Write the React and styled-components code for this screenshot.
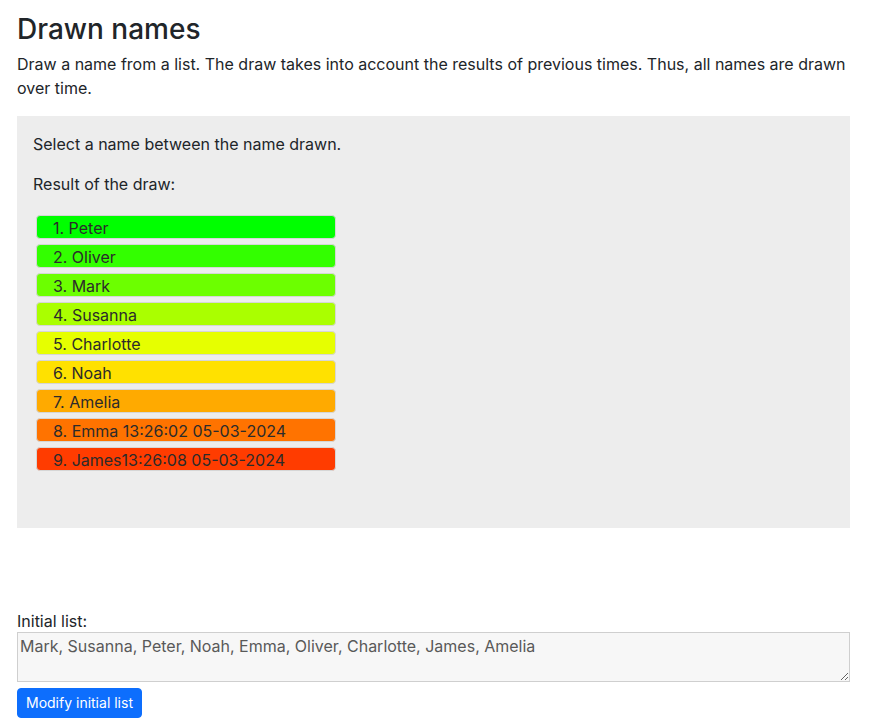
import React from "react";
import styled, { createGlobalStyle } from "styled-components";

const Global = createGlobalStyle`
  html, body { margin: 0; padding: 0; background: #fff; }
  body {
    font-family: Inter, "Noto Sans", sans-serif;
    font-size: 16px;
    line-height: 1.5;
    color: #212529;
  }
  * { box-sizing: border-box; }
`;

const Page = styled.div`
  width: 850px;
  padding: 13px 0 0 17px;
`;

const Title = styled.h1`
  margin: 0 0 5px;
  font-size: 28px;
  font-weight: 500;
  line-height: 1.2;
`;

const Intro = styled.p`
  margin: 0 0 16px;
`;

const Panel = styled.section`
  background: #ededed;
  padding: 16px 16px 55px;
  height: 412px;
`;

const Para = styled.p`
  margin: 0 0 16px;
`;

const List = styled.ul`
  list-style: none;
  margin: 19px 0 0;
  padding: 0 0 0 3px;
  display: flex;
  flex-direction: column;
  gap: 5px;
`;

const Item = styled.li`
  width: 300px;
  height: 24px;
  border: 1px solid #d6d6d6;
  border-radius: 4px;
  background: ${(p) => p.$color};
  padding: 1px 0 0 16px;
  line-height: 22px;
  color: #2b2b2b;
  cursor: pointer;
`;

const Form = styled.div`
  margin-top: 82px;
`;

const Label = styled.label`
  display: block;
  line-height: 22px;
`;

const Area = styled.textarea`
  display: block;
  width: 833px;
  height: 50px;
  margin: 0;
  padding: 1px 2px;
  font-family: Inter, "Noto Sans", sans-serif;
  font-size: 16px;
  line-height: 24px;
  color: #595959;
  background: #f7f7f7;
  border: 1px solid #cfcfcf;
  resize: both;
  &:read-only { background: #f7f7f7; }
`;

const Button = styled.button`
  margin-top: 6px;
  height: 30px;
  padding: 0 8px;
  font-family: Inter, "Noto Sans", sans-serif;
  font-size: 14px;
  color: #fff;
  background: #0d6efd;
  border: 1px solid #0d6efd;
  border-radius: 4px;
  cursor: pointer;
`;

const items = [
  ["1. Peter", "#00ff00"],
  ["2. Oliver", "#33ff00"],
  ["3. Mark", "#6cff00"],
  ["4. Susanna", "#aaff00"],
  ["5. Charlotte", "#e6ff00"],
  ["6. Noah", "#ffe100"],
  ["7. Amelia", "#ffaa00"],
  ["8. Emma 13:26:02 05-03-2024", "#ff7300"],
  ["9. James13:26:08 05-03-2024", "#ff3c00"],
];

export default function App() {
  return (
    <Page>
      <Global />
      <Title>Drawn names</Title>
      <Intro>
        Draw a name from a list. The draw takes into account the results of previous times. Thus, all names are drawn
        over time.
      </Intro>
      <Panel>
        <Para>Select a name between the name drawn.</Para>
        <Para>Result of the draw:</Para>
        <List>
          {items.map(([t, c]) => (
            <Item key={t} $color={c}>{t}</Item>
          ))}
        </List>
      </Panel>
      <Form>
        <Label htmlFor="initial">Initial list:</Label>
        <Area
          id="initial"
          readOnly
          defaultValue="Mark, Susanna, Peter, Noah, Emma, Oliver, Charlotte, James, Amelia"
        />
        <Button>Modify initial list</Button>
      </Form>
    </Page>
  );
}
